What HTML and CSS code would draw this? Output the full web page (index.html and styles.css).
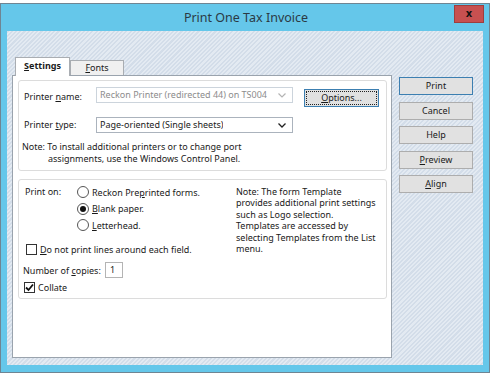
FILE: index.html
```html
<!DOCTYPE html>
<html>
<head>
<meta charset="utf-8">
<link rel="stylesheet" href="styles.css">
</head>
<body>
<div class="window">
  <div class="titlebar">
    <span class="title">Print One Tax Invoice</span>
    <div class="close">x</div>
  </div>
  <div class="client">
    <div class="main">
      <div class="tabs">
        <div class="tab active"><u>S</u>ettings</div>
        <div class="tab"><u>F</u>onts</div>
      </div>
      <div class="panel">
        <div class="group g1">
          <div class="row r1">
            <div class="label">Printer <u>n</u>ame:</div>
            <div class="combo disabled">
              <span class="combo-text">Reckon Printer (redirected 44) on TS004</span>
              <svg class="chev" width="8" height="5" viewBox="0 0 8 5"><polyline points="0.5,0.5 4,4 7.5,0.5" fill="none" stroke="#b4b4b4" stroke-width="1.2"/></svg>
            </div>
            <div class="btn options"><span class="focus"><u>O</u>ptions...</span></div>
          </div>
          <div class="row r2">
            <div class="label">Printer <u>t</u>ype:</div>
            <div class="combo">
              <span class="combo-text">Page-oriented (Single sheets)</span>
              <svg class="chev" width="8" height="5" viewBox="0 0 8 5"><polyline points="0.5,0.5 4,4 7.5,0.5" fill="none" stroke="#222" stroke-width="1.3"/></svg>
            </div>
          </div>
          <div class="note1">
            <div>Note: To install additional printers or to change port</div>
            <div class="indent">assignments, use the Windows Control Panel.</div>
          </div>
        </div>
        <div class="group g2">
          <div class="left">
            <div class="printon">
              <div class="po-label">Print on:</div>
              <div class="radios">
                <div class="opt"><span class="radio"></span>Reckon Pre<u>p</u>rinted forms.</div>
                <div class="opt"><span class="radio on"></span><u>B</u>lank paper.</div>
                <div class="opt"><span class="radio"></span><u>L</u>etterhead.</div>
              </div>
            </div>
            <div class="chk-row lines"><span class="check"></span><u>D</u>o not print lines around each field.</div>
            <div class="copies"><span class="copies-label">Number of <u>c</u>opies:</span><span class="input">1</span></div>
            <div class="chk-row collate"><span class="check on"><svg width="9" height="9" viewBox="0 0 9 9"><polyline points="1,4.5 3.5,7 8,1.5" fill="none" stroke="#111" stroke-width="1.8"/></svg></span>Collate</div>
          </div>
          <div class="note2">
            <div>Note: The form Template</div>
            <div>provides additional print settings</div>
            <div>such as Logo selection.</div>
            <div>Templates are accessed by</div>
            <div>selecting Templates from the List</div>
            <div>menu.</div>
          </div>
        </div>
      </div>
    </div>
    <div class="buttons">
      <div class="btn side default">Print</div>
      <div class="btn side">Cancel</div>
      <div class="btn side">Help</div>
      <div class="btn side"><u>P</u>review</div>
      <div class="btn side"><u>A</u>lign</div>
    </div>
  </div>
</div>
</body>
</html>
```

FILE: styles.css
```css
* { box-sizing: border-box; }
html, body { margin: 0; padding: 0; background: #ffffff; }
body {
  font-family: "Noto Sans", "Open Sans", sans-serif;
  font-size: 9px;
  color: #1a1a1a;
  white-space: nowrap;
}
u { text-decoration: underline; text-underline-offset: 1px; }

.window {
  margin-top: 3px;
  width: 490px;
  height: 370px;
  border: 1px solid #6f8593;
  background: #65c7ea;
  display: flex;
  flex-direction: column;
}

.titlebar {
  height: 27px;
  display: grid;
  grid-template-columns: 1fr auto 1fr;
  align-items: start;
}
.title {
  grid-column: 2;
  font-size: 12.5px;
  color: #2b3a44;
  line-height: 27px;
  padding-left: 2px;
}
.close {
  grid-column: 3;
  justify-self: end;
  margin-top: 1px;
  margin-right: 5px;
  width: 30px;
  height: 18px;
  background: #c75050;
  border: 1px solid #9e3e3e;
  color: #111;
  font-family: "DejaVu Sans", sans-serif;
  font-weight: bold;
  font-size: 10px;
  line-height: 15px;
  text-align: center;
}

.client {
  flex: 1;
  margin: 0 6px 7px 6px;
  padding: 26px 9px 7px 5px;
  display: flex;
  background-color: #d6e0eb;
  background-image: repeating-linear-gradient(135deg, #d3dde9 0px, #d3dde9 1.5px, #e3eaf2 1.5px, #e3eaf2 3px);
}

.main {
  width: 380px;
  display: flex;
  flex-direction: column;
}
.tabs {
  display: flex;
  align-items: flex-end;
  height: 18px;
  padding-left: 3px;
  position: relative;
  z-index: 2;
}
.tab {
  height: 15px;
  width: 54px;
  border: 1px solid #a9adb2;
  border-bottom: none;
  background: #f0f0f0;
  text-align: center;
  line-height: 14px;
  color: #1a1a1a;
}
.tab.active {
  width: 55px;
  height: 19px;
  margin-bottom: -1px;
  background: #ffffff;
  font-weight: bold;
  line-height: 16px;
  border-color: #a9adb2;
}

.panel {
  flex: 1;
  background: #ffffff;
  border: 1px solid #9aa3ad;
  padding: 4px 4px 0 5px;
  display: flex;
  flex-direction: column;
  gap: 8px;
}

.group {
  border: 1px solid #dcdcdc;
  border-radius: 3px;
  background: #ffffff;
}

.g1 { padding: 6px 6px 6px 5px; height: 91px; }
.row { display: flex; align-items: flex-start; }
.r2 { margin-top: 10px; }
.label { width: 72px; line-height: 16px; }
.r1 .label { margin-top: 2px; }
.combo {
  width: 197px;
  height: 16px;
  border: 1px solid #abb3bd;
  display: flex;
  align-items: center;
  justify-content: space-between;
  padding: 0 6px 0 3px;
  background: #fff;
}
.combo.disabled { border-color: #ccd4dc; color: #8c8c8c; }
.combo-text { line-height: 14px; overflow: hidden; }
.chev { display: block; flex: none; }

.btn {
  background: #e1e1e1;
  border: 1px solid #adadad;
  text-align: center;
  height: 18px;
  line-height: 16px;
}
.options {
  margin-left: 11px;
  margin-top: 2px;
  width: 75px;
  border-color: #3c7fb1;
  padding: 1px;
}
.focus {
  display: block;
  height: 14px;
  border: 1px dotted #222;
  line-height: 12px;
}

.note1 { margin-top: 8px; margin-left: -2px; line-height: 11.5px; }
.indent { padding-left: 26px; }

.g2 {
  height: 120px;
  padding: 4px 6px 3px 5px;
  display: grid;
  grid-template-columns: 212px 1fr;
  align-items: start;
}
.printon { display: flex; }
.po-label { width: 53px; padding-left: 1px; line-height: 16.5px; }
.opt { display: flex; align-items: center; height: 16.5px; }
.radio {
  width: 12px;
  height: 12px;
  border: 1px solid #555;
  border-radius: 50%;
  background: #fff;
  margin-right: 3px;
  display: flex;
  align-items: center;
  justify-content: center;
}
.radio.on::after {
  content: "";
  width: 6px;
  height: 6px;
  border-radius: 50%;
  background: #111;
}
.chk-row { display: flex; align-items: center; height: 16px; }
.check {
  width: 11px;
  height: 11px;
  border: 1px solid #333;
  background: #fff;
  margin-right: 3px;
  display: flex;
  align-items: center;
  justify-content: center;
}
.lines { margin-top: 8px; margin-left: 2px; }
.copies { display: flex; align-items: center; height: 16px; margin-top: 4.5px; margin-left: -1px; }
.copies-label { width: 82px; }
.input {
  width: 18px;
  height: 16px;
  border: 1px solid #b4b4b4;
  padding-left: 4px;
  line-height: 14px;
}
.collate { margin-top: 1px; }

.note2 { margin-top: 2px; line-height: 11.4px; }

.buttons {
  margin-left: 7px;
  padding-top: 20px;
  width: 74px;
  display: flex;
  flex-direction: column;
  gap: 6.5px;
}
.side { width: 74px; }
.default { border-color: #3c7fb1; }
```
